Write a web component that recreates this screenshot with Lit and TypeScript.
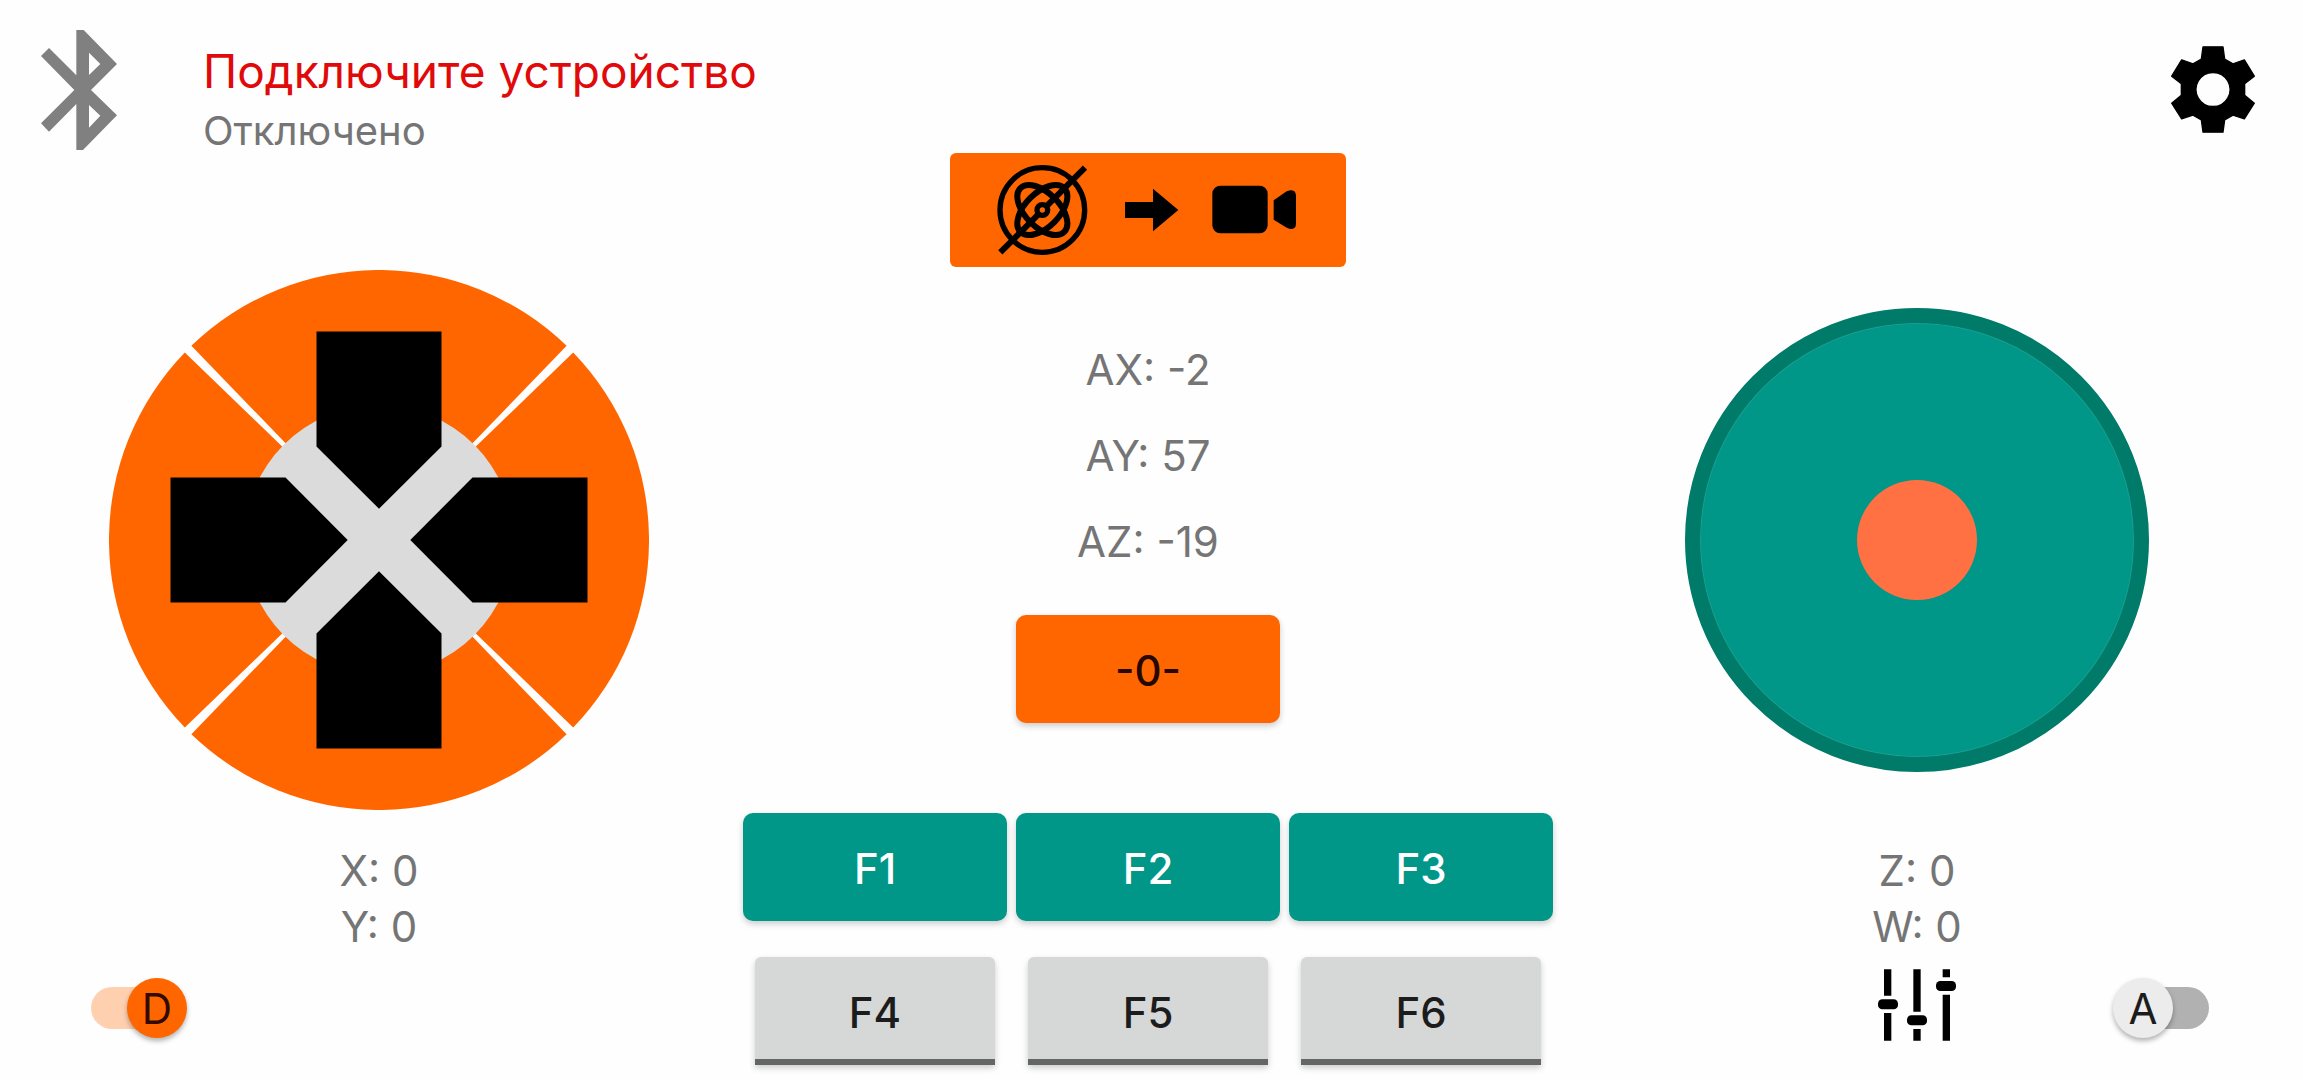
import { LitElement, html, css, svg } from "lit";
import { customElement, property, state } from "lit/decorators.js";

@customElement("letter-switch")
class LetterSwitch extends LitElement {
  @property() letter = "";
  @property() name = "";
  @property({ type: Boolean }) checked = false;

  static styles = css`
    :host { display: block; }
    .switch {
      display: grid;
      width: 96px;
      height: 60px;
      align-items: center;
      cursor: pointer;
    }
    .input, .track, .thumb { grid-area: 1 / 1; margin: 0; }
    .input { appearance: none; width: 96px; height: 60px; }
    .track {
      width: 88px;
      height: 42px;
      border-radius: 21px;
      background: #b1b1b1;
      justify-self: end;
    }
    .thumb {
      width: 60px;
      height: 60px;
      border-radius: 50%;
      background: #ececec;
      color: #1c1c1c;
      box-shadow: 0 3px 5px rgba(0, 0, 0, 0.3);
      font-size: 42px;
      line-height: 62px;
      text-align: center;
      justify-self: start;
    }
    .input:checked ~ .track { background: #ffd0b0; justify-self: start; }
    .input:checked ~ .thumb { background: #ff6600; color: #330a00; justify-self: end; }
  `;

  private toggle(e: Event) {
    this.checked = (e.target as HTMLInputElement).checked;
  }

  render() {
    return html`
      <label class="switch">
        <input class="input" type="checkbox" role="switch" name=${this.name}
          .checked=${this.checked} @change=${this.toggle} />
        <span class="track"></span>
        <span class="thumb">${this.letter}</span>
      </label>
    `;
  }
}

@customElement("direction-pad")
class DirectionPad extends LitElement {
  static styles = css`
    :host { display: block; }
    .pad { display: grid; width: 540px; height: 540px; }
    .base, .arrow { grid-area: 1 / 1; }
    .arrow {
      display: block;
      padding: 0;
      border: 0;
      background: none;
      pointer-events: none;
    }
    .arrow path { pointer-events: auto; cursor: pointer; }
    .drawing { display: block; width: 540px; height: 540px; }
  `;

  render() {
    const arrows = [
      { id: "up", angle: 0 },
      { id: "right", angle: 90 },
      { id: "down", angle: 180 },
      { id: "left", angle: 270 },
    ];
    return html`
      <div class="pad">
        <svg class="base drawing" viewBox="-270 -270 540 540">
          ${arrows.map(
            (a) => svg`<path fill="#ff6600" transform="rotate(${a.angle})"
              d="M0 0L194.2 -187.6A270 270 0 0 1 194.2 187.6Z" />`
          )}
          <circle r="134.7" fill="#dbdbdb" />
        </svg>
        ${arrows.map(
          (a) => html`<button class="arrow" name=${a.id}>
            <svg class="drawing" viewBox="-270 -270 540 540">
              <path transform="rotate(${a.angle})"
                d="M-62.5 -208.5H62.5V-93.5L0 -31.3L-62.5 -93.5Z" />
            </svg>
          </button>`
        )}
      </div>
    `;
  }
}

@customElement("app-root")
class AppRoot extends LitElement {
  @state() private left = { X: 0, Y: 0 };
  @state() private right = { Z: 0, W: 0 };
  @state() private tilt = { AX: -2, AY: 57, AZ: -19 };

  static styles = css`
    :host {
      display: block;
      background: #fefefe;
      color: #757575;
      font-family: Inter, "Noto Sans", sans-serif;
      font-size: 42px;
    }
    .page { display: flex; flex-direction: column; min-height: 100vh; }
    button { font: inherit; cursor: pointer; padding: 0; border: 0; background: none; }
    svg { display: block; }

    .header {
      display: flex;
      align-items: flex-start;
      height: 123px;
      padding: 30px 48px 0 41px;
    }
    .status { flex: 1; padding: 12px 0 0 86px; }
    .title { margin: 0; font-size: 46px; line-height: 58px; font-weight: 400; color: #e00a0a; }
    .state { margin: 0; font-size: 40px; line-height: 62px; }
    .settings { padding-top: 16px; }

    .panels {
      display: grid;
      grid-template-columns: 1fr 810px 1fr;
      padding: 0 22px 15px 15px;
    }
    .side { display: flex; flex-direction: column; align-items: center; }
    .side-left { padding-top: 117px; }
    .side-right { padding-top: 155px; }
    .values { margin: 33px 0 14px; padding: 0; list-style: none; text-align: center; line-height: 56px; }
    .side-right .values { margin-top: 71px; }
    .tools {
      display: grid;
      grid-template-columns: 1fr auto 1fr;
      align-self: stretch;
      align-items: center;
      height: 78px;
      padding: 0 76px;
    }
    .side-right .tools { padding: 0 72px; }
    .tools .switch-right { grid-column: 3; justify-self: end; }
    .sliders { grid-column: 2; align-self: start; }

    .stick {
      display: grid;
      place-items: center;
      box-sizing: border-box;
      width: 464px;
      height: 464px;
      border: 15px solid #007a69;
      border-radius: 50%;
      background: #009688;
      box-shadow: inset 0 0 0 1px #1c9f8e;
    }
    .knob { width: 120px; height: 120px; border-radius: 50%; background: #ff7043; }

    .center { display: flex; flex-direction: column; align-items: center; }
    .mode {
      display: flex;
      justify-content: center;
      width: 396px;
      height: 114px;
      border-radius: 6px;
      background: #ff6600;
    }
    .tilt { margin: 60px 0 30px; padding: 0; list-style: none; text-align: center; line-height: 86px; }
    .key {
      height: 108px;
      padding-top: 2px;
      border-radius: 10px;
      box-shadow: 0 3px 6px rgba(0, 0, 0, 0.2);
      font-weight: 500;
    }
    .zero { width: 264px; background: #ff6600; color: #260800; }
    .keys {
      display: grid;
      grid-template-columns: repeat(3, 1fr);
      align-self: stretch;
      gap: 36px 9px;
      margin-top: 90px;
    }
    .key-main { background: #009688; color: #fff; }
    .key-extra {
      margin: 0 12px;
      padding-top: 8px;
      border-bottom: 6px solid #646666;
      border-radius: 6px 6px 0 0;
      background: #d6d8d7;
      color: #1c1c1c;
    }
  `;

  private rows(values: Record<string, number>) {
    return Object.entries(values).map(([k, v]) => html`<li>${k}: ${v}</li>`);
  }

  render() {
    return html`
      <div class="page">
        <header class="header">
          <button name="bluetooth">
            <svg width="76" height="120" viewBox="34 30 228 360">
              <path fill="#808080" fill-rule="evenodd"
                d="M140 30H162L262 132L184 210L262 286L160 390H140V252L58 335L34 310L134 210L34 108L58 84L140 166ZM178 98V165L212 132ZM178 255V323L212 287Z" />
            </svg>
          </button>
          <div class="status">
            <h1 class="title">Подключите устройство</h1>
            <p class="state">Отключено</p>
          </div>
          <button class="settings" name="settings">
            <svg width="84" height="87" viewBox="153 80 252 260">
              <path fill-rule="evenodd" stroke="#000" stroke-width="4" stroke-linejoin="round"
                d="M249 82H309L314 119L339 133L373 121L403 170L374 193V227L403 251L373 298L339 287L314 301L309 338H249L244 301L219 287L185 298L155 251L184 227V193L155 170L185 121L219 133L244 119ZM279 159a51 51 0 1 0 .1 0Z" />
            </svg>
          </button>
        </header>

        <main class="panels">
          <section class="side side-left">
            <direction-pad></direction-pad>
            <ul class="values">${this.rows(this.left)}</ul>
            <div class="tools">
              <letter-switch letter="D" name="digital" checked></letter-switch>
            </div>
          </section>

          <section class="center">
            <button class="mode" name="mode">
              <svg width="396" height="114" viewBox="60 38 1188 342">
                <g fill="none" stroke="#000" stroke-width="16">
                  <circle cx="337" cy="209" r="127" />
                  <ellipse cx="337" cy="209" rx="93" ry="51" stroke-width="18" transform="rotate(45 337 209)" />
                  <ellipse cx="337" cy="209" rx="93" ry="51" stroke-width="18" transform="rotate(-45 337 209)" />
                  <path d="M211 336L465 82" stroke-width="18" />
                  <circle cx="337" cy="209" r="16" fill="#ff6600" />
                </g>
                <path d="M585 185H669V145L745 209L669 273V233H585Z" />
                <rect x="847" y="136" width="166" height="143" rx="24" />
                <path d="M1031 180L1070 153Q1098 142 1098 168V248Q1098 274 1070 262L1031 238Z" />
              </svg>
            </button>
            <ul class="tilt">${this.rows(this.tilt)}</ul>
            <button class="key zero">-0-</button>
            <div class="keys">
              ${["F1", "F2", "F3"].map((k) => html`<button class="key key-main">${k}</button>`)}
              ${["F4", "F5", "F6"].map((k) => html`<button class="key key-extra">${k}</button>`)}
            </div>
          </section>

          <section class="side side-right">
            <div class="stick"><button class="knob" name="stick"></button></div>
            <ul class="values">${this.rows(this.right)}</ul>
            <div class="tools">
              <button class="sliders" name="tuning">
                <svg width="78" height="72" viewBox="177 417 234 216">
                  <path d="M195 418h22v79h-22zM195 549h22v83h-22zM283 418h22v127h-22zM283 597h22v35h-22zM371 418h22v24h-22zM371 494h22v138h-22z" />
                  <rect x="177" y="508" width="60" height="30" rx="13" />
                  <rect x="264" y="556" width="60" height="30" rx="13" />
                  <rect x="351" y="453" width="60" height="30" rx="13" />
                </svg>
              </button>
              <letter-switch class="switch-right" letter="A" name="analog"></letter-switch>
            </div>
          </section>
        </main>
      </div>
    `;
  }
}
